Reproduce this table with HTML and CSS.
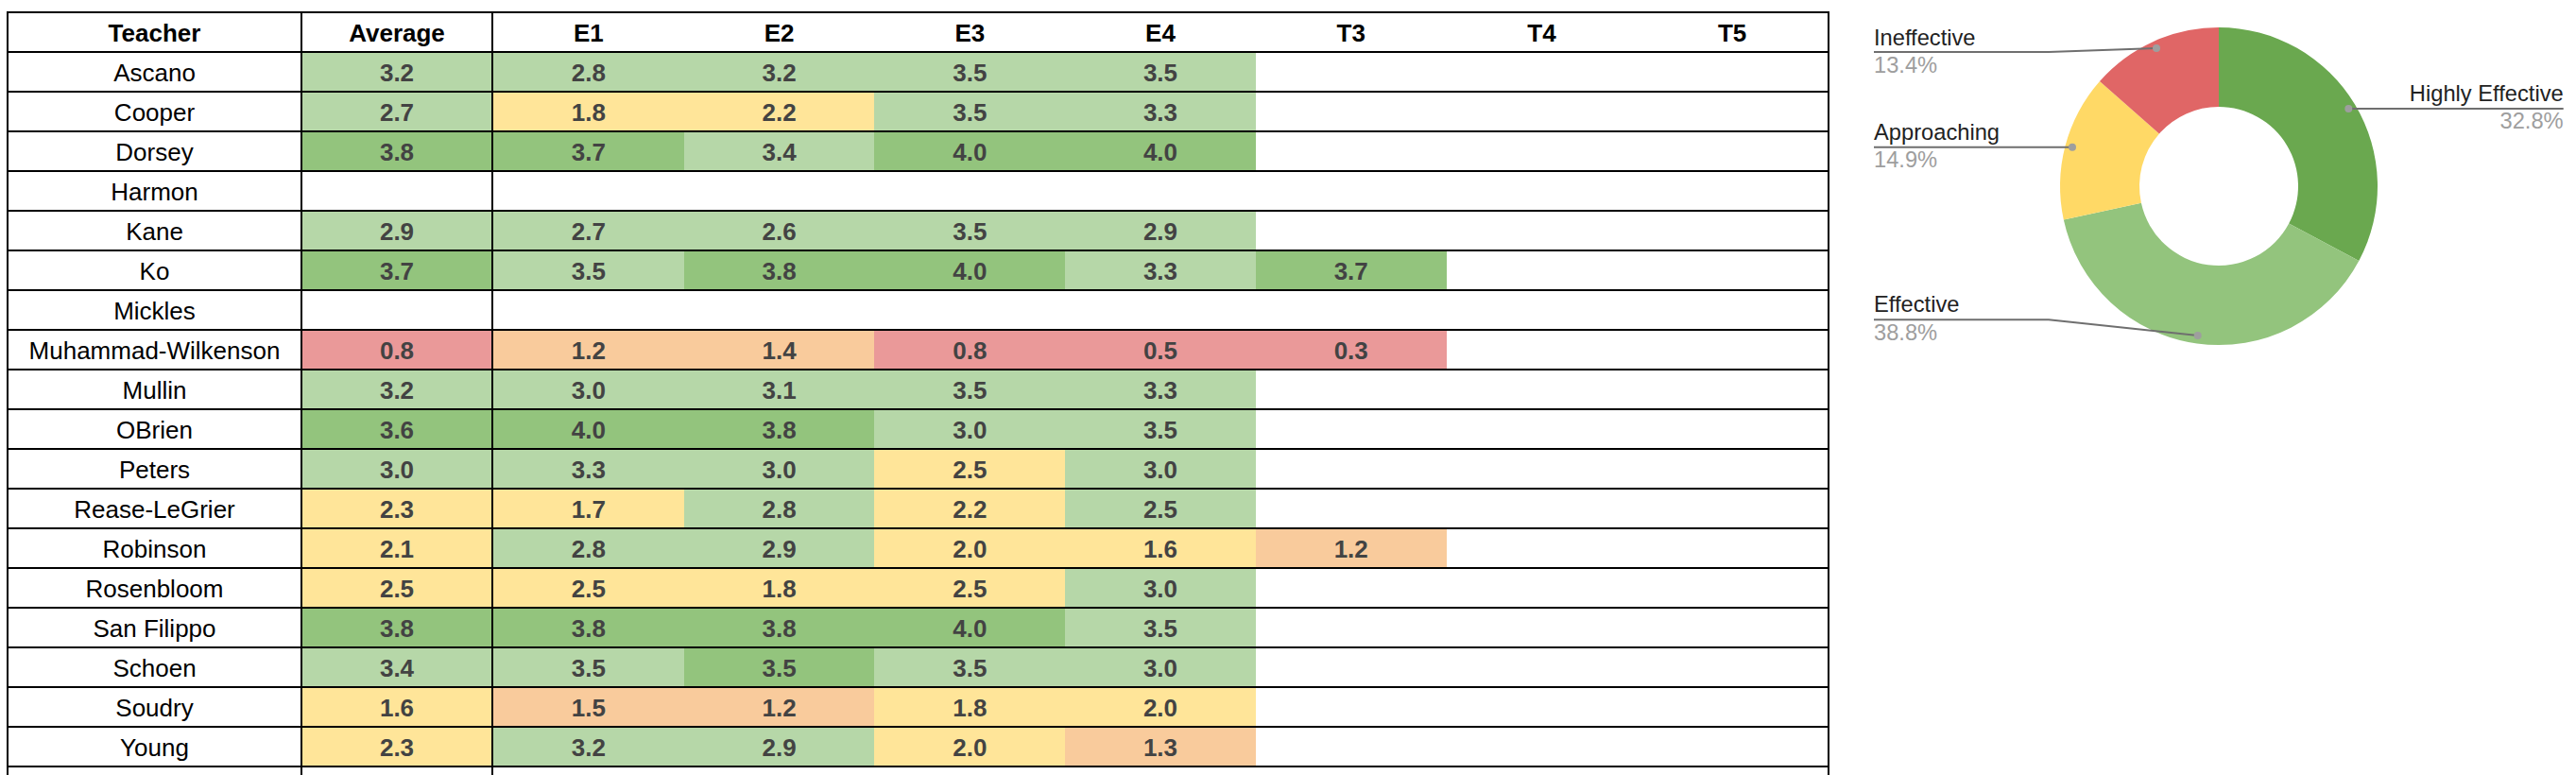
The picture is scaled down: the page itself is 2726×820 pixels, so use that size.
FILE: index.html
```html
<!DOCTYPE html>
<html>
<head>
<meta charset="utf-8">
<link rel="stylesheet" href="styles.css">
</head>
<body>
<div class="page">
  <div class="sheet">
    <div class="row head">
      <div class="name">Teacher</div><div class="avg">Average</div>
      <div>E1</div><div>E2</div><div>E3</div><div>E4</div><div>T3</div><div>T4</div><div>T5</div>
    </div>
    <div class="row"><div class="name">Ascano</div><div class="avg lg">3.2</div><div class="lg">2.8</div><div class="lg">3.2</div><div class="lg">3.5</div><div class="lg">3.5</div><div></div><div></div><div></div></div>
    <div class="row"><div class="name">Cooper</div><div class="avg lg">2.7</div><div class="y">1.8</div><div class="y">2.2</div><div class="lg">3.5</div><div class="lg">3.3</div><div></div><div></div><div></div></div>
    <div class="row"><div class="name">Dorsey</div><div class="avg dg">3.8</div><div class="dg">3.7</div><div class="lg">3.4</div><div class="dg">4.0</div><div class="dg">4.0</div><div></div><div></div><div></div></div>
    <div class="row"><div class="name">Harmon</div><div class="avg"></div><div></div><div></div><div></div><div></div><div></div><div></div><div></div></div>
    <div class="row"><div class="name">Kane</div><div class="avg lg">2.9</div><div class="lg">2.7</div><div class="lg">2.6</div><div class="lg">3.5</div><div class="lg">2.9</div><div></div><div></div><div></div></div>
    <div class="row"><div class="name">Ko</div><div class="avg dg">3.7</div><div class="lg">3.5</div><div class="dg">3.8</div><div class="dg">4.0</div><div class="lg">3.3</div><div class="dg">3.7</div><div></div><div></div></div>
    <div class="row"><div class="name">Mickles</div><div class="avg"></div><div></div><div></div><div></div><div></div><div></div><div></div><div></div></div>
    <div class="row"><div class="name">Muhammad-Wilkenson</div><div class="avg r">0.8</div><div class="o">1.2</div><div class="o">1.4</div><div class="r">0.8</div><div class="r">0.5</div><div class="r">0.3</div><div></div><div></div></div>
    <div class="row"><div class="name">Mullin</div><div class="avg lg">3.2</div><div class="lg">3.0</div><div class="lg">3.1</div><div class="lg">3.5</div><div class="lg">3.3</div><div></div><div></div><div></div></div>
    <div class="row"><div class="name">OBrien</div><div class="avg dg">3.6</div><div class="dg">4.0</div><div class="dg">3.8</div><div class="lg">3.0</div><div class="lg">3.5</div><div></div><div></div><div></div></div>
    <div class="row"><div class="name">Peters</div><div class="avg lg">3.0</div><div class="lg">3.3</div><div class="lg">3.0</div><div class="y">2.5</div><div class="lg">3.0</div><div></div><div></div><div></div></div>
    <div class="row"><div class="name">Rease-LeGrier</div><div class="avg y">2.3</div><div class="y">1.7</div><div class="lg">2.8</div><div class="y">2.2</div><div class="lg">2.5</div><div></div><div></div><div></div></div>
    <div class="row"><div class="name">Robinson</div><div class="avg y">2.1</div><div class="lg">2.8</div><div class="lg">2.9</div><div class="y">2.0</div><div class="y">1.6</div><div class="o">1.2</div><div></div><div></div></div>
    <div class="row"><div class="name">Rosenbloom</div><div class="avg y">2.5</div><div class="y">2.5</div><div class="y">1.8</div><div class="y">2.5</div><div class="lg">3.0</div><div></div><div></div><div></div></div>
    <div class="row"><div class="name">San Filippo</div><div class="avg dg">3.8</div><div class="dg">3.8</div><div class="dg">3.8</div><div class="dg">4.0</div><div class="lg">3.5</div><div></div><div></div><div></div></div>
    <div class="row"><div class="name">Schoen</div><div class="avg lg">3.4</div><div class="lg">3.5</div><div class="dg">3.5</div><div class="lg">3.5</div><div class="lg">3.0</div><div></div><div></div><div></div></div>
    <div class="row"><div class="name">Soudry</div><div class="avg y">1.6</div><div class="o">1.5</div><div class="o">1.2</div><div class="y">1.8</div><div class="y">2.0</div><div></div><div></div><div></div></div>
    <div class="row"><div class="name">Young</div><div class="avg y">2.3</div><div class="lg">3.2</div><div class="lg">2.9</div><div class="y">2.0</div><div class="o">1.3</div><div></div><div></div><div></div></div>
    <div class="row"><div class="name"></div><div class="avg"></div><div></div><div></div><div></div><div></div><div></div><div></div><div></div></div>
  </div>

  <svg class="chart" width="776" height="400" viewBox="0 0 776 400">
    <path class="s-he" d="M398 29 A168 168 0 0 1 546.28 275.98 L472.14 236.49 A84 84 0 0 0 398 113 Z"/>
    <path class="s-e" d="M546.28 275.98 A168 168 0 0 1 233.81 232.62 L315.91 214.81 A84 84 0 0 0 472.14 236.49 Z"/>
    <path class="s-a" d="M233.81 232.62 A168 168 0 0 1 271.98 85.9 L334.99 141.45 A84 84 0 0 0 315.91 214.81 Z"/>
    <path class="s-i" d="M271.98 85.9 A168 168 0 0 1 398 29 L398 113 A84 84 0 0 0 334.99 141.45 Z"/>

    <path class="lead" d="M33 55 H218 L332 51"/>
    <circle class="dot" cx="332" cy="51" r="4"/>
    <text class="lbl" x="33" y="48">Ineffective</text>
    <text class="pct" x="33" y="77">13.4%</text>

    <path class="lead" d="M33 155.7 H243"/>
    <circle class="dot" cx="243" cy="155.7" r="4"/>
    <text class="lbl" x="33" y="147.5">Approaching</text>
    <text class="pct" x="33" y="177">14.9%</text>

    <path class="lead" d="M33 338.3 H218 L375.7 355"/>
    <circle class="dot" cx="375.7" cy="355" r="4"/>
    <text class="lbl" x="33" y="330">Effective</text>
    <text class="pct" x="33" y="360">38.8%</text>

    <path class="lead" d="M535.3 115 H762.7"/>
    <circle class="dot" cx="535.3" cy="115" r="4"/>
    <text class="lbl" x="762.7" y="106.5" text-anchor="end">Highly Effective</text>
    <text class="pct" x="762.7" y="136" text-anchor="end">32.8%</text>
  </svg>
</div>
</body>
</html>
```
FILE: styles.css
```css
html, body {
  margin: 0;
  padding: 0;
  overflow: hidden;
  background: #fff;
}

.page {
  display: flex;
  align-items: flex-start;
  width: 2726px;
  height: 820px;
}

.sheet {
  margin: 12px 0 0 7px;
  width: 1929px;
  box-sizing: border-box;
  border: 2px solid #000;
  border-bottom: none;
  font-family: "Liberation Sans", Arial, sans-serif;
  font-size: 26px;
  flex: none;
}

.row {
  display: grid;
  grid-template-columns: 311px 202px repeat(7, 1fr);
  height: 42px;
  box-sizing: border-box;
  border-bottom: 2px solid #000;
}

.row > div {
  box-sizing: border-box;
  height: 40px;
  padding-top: 3px;
  line-height: 37px;
  text-align: center;
  font-weight: bold;
  color: #434343;
  white-space: nowrap;
  overflow: hidden;
}

.row > .name {
  border-right: 2px solid #000;
  font-weight: normal;
  color: #000;
}

.row > .avg {
  border-right: 2px solid #000;
}

.head > div {
  color: #000;
}

.head > .name {
  font-weight: bold;
}

.lg { background: #b6d7a8; }
.dg { background: #93c47d; }
.y  { background: #ffe599; }
.o  { background: #f9cb9c; }
.r  { background: #ea9999; }

.chart {
  flex: none;
  margin-left: 14px;
  font-family: "Liberation Sans", Arial, sans-serif;
}

.s-he { fill: #6aa84f; }
.s-e  { fill: #93c47d; }
.s-a  { fill: #ffd966; }
.s-i  { fill: #e06666; }

.lead {
  fill: none;
  stroke: #6f6f6f;
  stroke-width: 2;
}

.dot { fill: #9e9e9e; }

.lbl {
  font-size: 23.7px;
  fill: #222;
}

.pct {
  font-size: 23.7px;
  fill: #9e9e9e;
}
```
